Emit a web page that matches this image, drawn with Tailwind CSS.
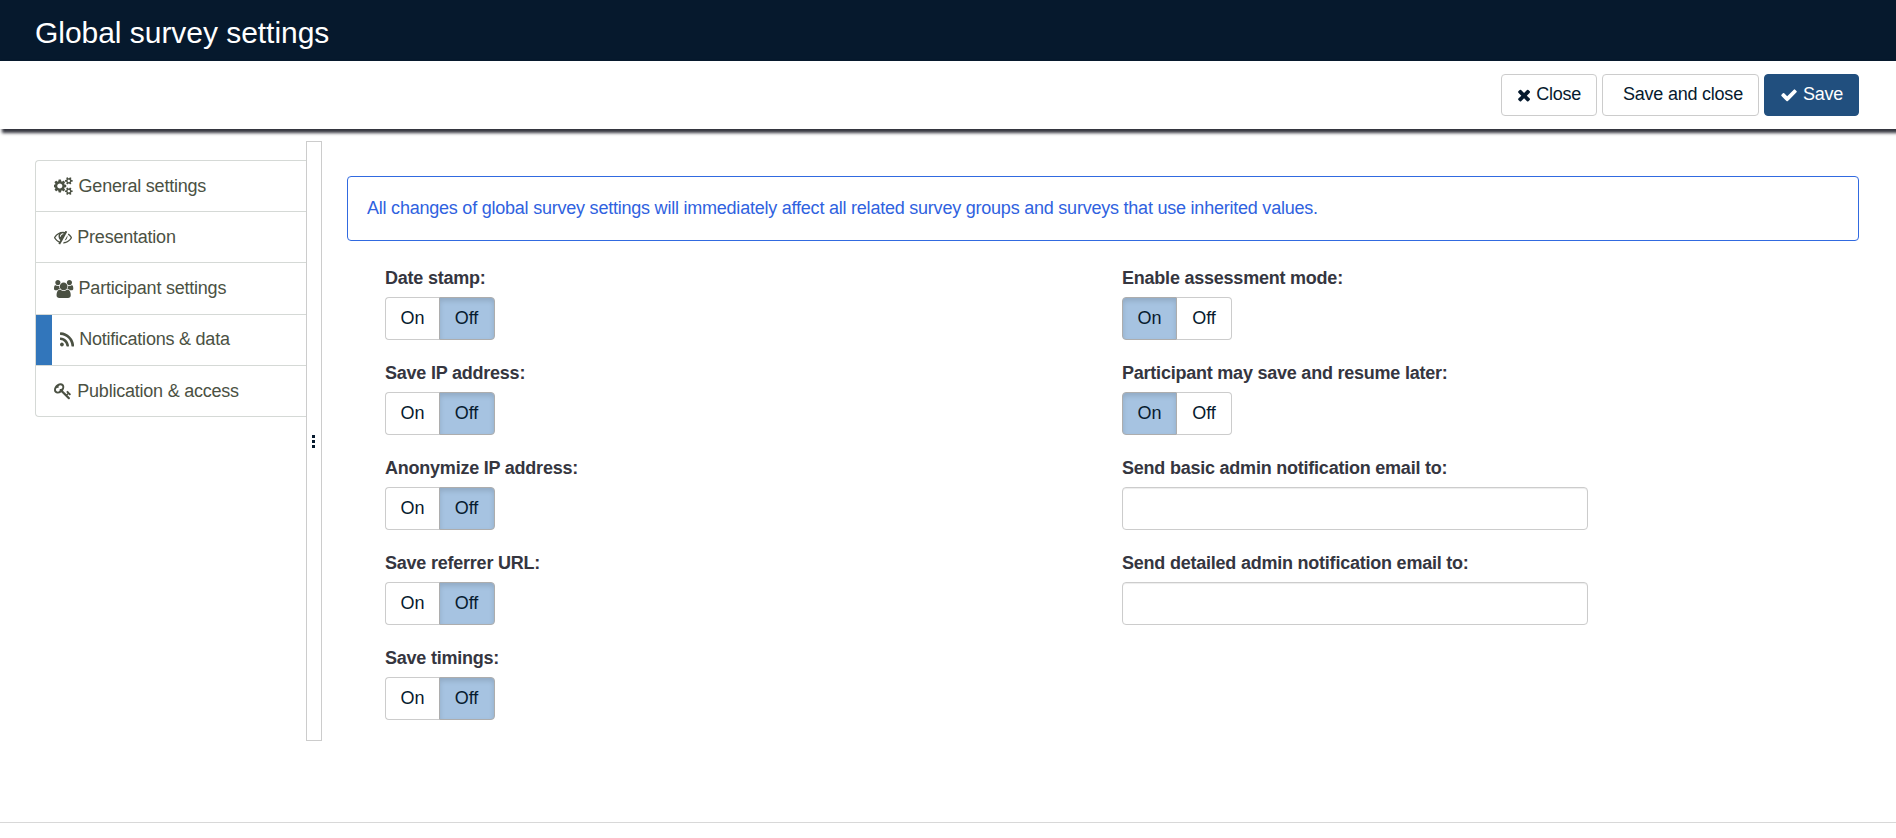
<!DOCTYPE html>
<html lang="en">
<head>
<meta charset="utf-8">
<title>Global survey settings</title>
<script src="https://cdn.jsdelivr.net/npm/@tailwindcss/browser@4"></script>
</head>
<body class="flex h-[838px] flex-col overflow-hidden bg-white font-['Liberation_Sans',Arial,sans-serif] text-[18px] leading-[25.7px] tracking-[-0.225px] text-[#061a2e]">
  <header class="flex h-[61px] shrink-0 items-start bg-[#06192d] px-[35px] pt-4">
    <h1 class="text-[30px] leading-[33px] tracking-[-0.04px] text-white">Global survey settings</h1>
  </header>

  <div class="flex h-[68px] shrink-0 justify-end gap-[5px] bg-white pt-[13px] pr-[37px] shadow-[3px_3px_3px_1px_#35363f]">
    <button class="flex h-[42px] w-24 items-center gap-[5px] rounded border border-[#ccc] pl-[15px]">
      <svg class="h-[18px] w-[14.14px] shrink-0 fill-current" viewBox="192 0 1408 1792"><path d="M1490 1322q0 40-28 68l-136 136q-28 28-68 28t-68-28l-294-294-294 294q-28 28-68 28t-68-28l-136-136q-28-28-28-68t28-68l294-294-294-294q-28-28-28-68t28-68l136-136q28-28 68-28t68 28l294 294 294-294q28-28 68-28t68 28l136 136q28 28 28 68t-28 68l-294 294 294 294q28 28 28 68z"/></svg>
      <span>Close</span>
    </button>
    <button class="flex h-[42px] w-[157px] items-center rounded border border-[#ccc] pl-5"><span class="whitespace-nowrap">Save and close</span></button>
    <button class="flex h-[42px] w-[95px] items-center gap-[5px] rounded border border-[#214f7e] bg-[#214f7e] pl-[15px] text-white">
      <svg class="h-[18px] w-[18px] shrink-0 fill-current" viewBox="0 0 1792 1792"><path d="M1671 566q0 40-28 68l-724 724-136 136q-28 28-68 28t-68-28l-136-136-362-362q-28-28-28-68t28-68l136-136q28-28 68-28t68 28l294 295 656-657q28-28 68-28t68 28l136 136q28 28 28 68z"/></svg>
      <span>Save</span>
    </button>
  </div>

  <main class="flex h-[694px] shrink-0 border-b border-[#d8d8d8] pr-[37px] pl-[35px]">
    <nav class="mt-[31px] flex h-[257px] w-[271px] flex-col divide-y divide-[#d5d9d6] rounded-l border-y border-l border-[#d5d9d6] text-[#4b5143]">
      <a class="flex flex-1 items-center gap-[5px] pl-[18.3px]">
        <svg class="h-[18px] w-[19.3px] fill-current" viewBox="0 0 1920 1792"><path d="M832 896q0-106-75-181t-181-75-181 75-75 181 75 181 181 75 181-75 75-181zm768 512q0-52-38-90t-90-38-90 38-38 90q0 53 37.5 90.5t90.5 37.5 90.5-37.5 37.5-90.5zm0-1024q0-52-38-90t-90-38-90 38-38 90q0 53 37.5 90.5t90.5 37.5 90.5-37.5 37.5-90.5zm-384 421v185q0 10-7 19.5t-16 10.5l-155 24q-11 35-32 76 34 48 90 115 7 11 7 20 0 12-7 19-23 30-82.5 89.5t-78.5 59.5q-11 0-21-7l-115-90q-37 19-77 31-11 108-23 155-7 24-30 24h-186q-11 0-20-7.5t-10-17.5l-23-153q-34-10-75-31l-118 89q-7 7-20 7-11 0-21-8-144-133-144-160 0-9 7-19 10-14 41-53t47-61q-23-44-35-82l-152-24q-10-1-17-9.5t-7-19.5v-185q0-10 7-19.5t16-10.5l155-24q11-35 32-76-34-48-90-115-7-11-7-20 0-12 7-20 22-30 82-89t79-59q11 0 21 7l115 90q34-18 77-32 11-108 23-154 7-24 30-24h186q11 0 20 7.5t10 17.5l23 153q34 10 75 31l118-89q8-7 20-7 11 0 21 8 144 133 144 160 0 8-7 19-12 16-42 54t-45 60q23 48 34 82l152 23q10 2 17 10.5t7 19.5zm640 533v140q0 16-149 31-12 27-30 52 51 113 51 138 0 4-4 7-122 71-124 71-8 0-46-47t-52-68q-20 2-30 2t-30-2q-14 21-52 68t-46 47q-2 0-124-71-4-3-4-7 0-25 51-138-18-25-30-52-149-15-149-31v-140q0-16 149-31 13-29 30-52-51-113-51-138 0-4 4-7 4-2 35-20t59-34 30-16q8 0 46 46.5t52 67.5q20-2 30-2t30 2q51-71 92-112l6-2q4 0 124 70 4 3 4 7 0 25-51 138 17 23 30 52 149 15 149 31zm0-1024v140q0 16-149 31-12 27-30 52 51 113 51 138 0 4-4 7-122 71-124 71-8 0-46-47t-52-68q-20 2-30 2t-30-2q-14 21-52 68t-46 47q-2 0-124-71-4-3-4-7 0-25 51-138-18-25-30-52-149-15-149-31v-140q0-16 149-31 13-29 30-52-51-113-51-138 0-4 4-7 4-2 35-20t59-34 30-16q8 0 46 46.5t52 67.5q20-2 30-2t30 2q51-71 92-112l6-2q4 0 124 70 4 3 4 7 0 25-51 138 17 23 30 52 149 15 149 31z"/></svg>
        <span class="pt-px">General settings</span>
      </a>
      <a class="flex flex-1 items-center gap-[5px] pl-[18.3px]">
        <svg class="h-[18px] w-[18px] fill-current" viewBox="0 0 1792 1792"><path d="M555 1335l78-141q-87-63-136-159t-49-203q0-121 61-225-229 117-381 353 167 258 427 375zm389-759q0-20-14-34t-34-14q-125 0-214.5 89.5t-89.5 214.5q0 20 14 34t34 14 34-14 14-34q0-86 61-147t147-61q20 0 34-14t14-34zm363-191q0 7-1 9-105 188-315 566t-316 567l-49 89q-10 16-28 16-12 0-134-70-16-10-16-28 0-12 44-87-143-65-263.5-173t-208.5-245q-20-31-20-69t20-69q153-235 380-371t496-136q89 0 180 17l54-97q10-16 28-16 5 0 18 6t31 15.5 33 18.5 31.5 18.5 19.5 11.5q16 10 16 27zm37 447q0 139-79 253.5t-209 164.5l280-502q8 45 8 84zm448 128q0 35-20 69-39 64-109 145-150 172-347.5 267t-419.5 95l74-132q212-18 392.5-137t301.5-307q-115-179-282-294l63-112q95 64 182.5 153t144.5 184q20 34 20 69z"/></svg>
        <span class="pt-px">Presentation</span>
      </a>
      <a class="flex flex-1 items-center gap-[5px] pl-[18.3px]">
        <svg class="h-[18px] w-[19.3px] fill-current" viewBox="0 0 1920 1792"><path d="M593 896q-162 5-265 128h-134q-82 0-138-40.5t-56-118.5q0-353 124-353 6 0 43.5 21t97.5 42.5 119 21.5q67 0 133-23-5 37-5 66 0 139 81 256zm1071 637q0 120-73 189.5t-194 69.5h-874q-121 0-194-69.5t-73-189.5q0-53 3.5-103.5t14-109 26.5-108.5 43-97.5 62-81 85.5-53.5 111.5-20q10 0 43 21.5t73 48 107 48 135 21.5 135-21.5 107-48 73-48 43-21.5q61 0 111.5 20t85.5 53.5 62 81 43 97.5 26.5 108.5 14 109 3.5 103.5zm-1024-1277q0 106-75 181t-181 75-181-75-75-181 75-181 181-75 181 75 75 181zm704 384q0 159-112.5 271.5t-271.5 112.5-271.5-112.5-112.5-271.5 112.5-271.5 271.5-112.5 271.5 112.5 112.5 271.5zm576 225q0 78-56 118.5t-138 40.5h-134q-103-123-265-128 81-117 81-256 0-29-5-66 66 23 133 23 59 0 119-21.5t97.5-42.5 43.5-21q124 0 124 353zm-128-609q0 106-75 181t-181 75-181-75-75-181 75-181 181-75 181 75 75 181z"/></svg>
        <span class="pt-px">Participant settings</span>
      </a>
      <a class="flex flex-1 items-center gap-[5px]">
        <i class="mr-[3px] w-4 self-stretch bg-[#3276bb]"></i>
        <svg class="h-[18px] w-[14.14px] fill-current" viewBox="192 0 1408 1792"><path d="M576 1344q0 80-56 136t-136 56-136-56-56-136 56-136 136-56 136 56 56 136zm512 123q2 28-17 48-18 21-47 21h-135q-25 0-43-16.5t-20-41.5q-22-229-184.5-391.5t-391.5-184.5q-25-2-41.5-20t-16.5-43v-135q0-29 21-47 17-17 43-17h5q160 13 306 80.5t259 181.5q114 113 181.5 259t80.5 306zm512 2q2 27-18 47-18 20-46 20h-143q-26 0-44.5-17.5t-19.5-42.5q-12-215-101-408.5t-231.5-336-336-231.5-408.5-102q-25-1-42.5-19.5t-17.5-43.5v-143q0-28 20-46 18-18 44-18h3q262 13 501.5 120t425.5 294q187 186 294 425.5t120 501.5z"/></svg>
        <span>Notifications &amp; data</span>
      </a>
      <a class="flex flex-1 items-center gap-[5px] pl-[18.3px]">
        <svg class="h-[18px] w-[18px] fill-current" viewBox="0 0 1792 1792"><path d="M832 512q0-80-56-136t-136-56-136 56-56 136q0 42 19 83-41-19-83-19-80 0-136 56t-56 136 56 136 136 56 136-56 56-136q0-42-19-83 41 19 83 19 80 0 136-56t56-136zm851 704q0 17-49 66t-66 49q-9 0-28.5-16t-36.5-33-38.5-40-24.5-26l-96 96 220 220q28 28 28 68 0 42-39 81t-81 39q-40 0-68-28l-671-671q-176 131-365 131-163 0-265.5-102.5t-102.5-265.5q0-160 95-313t248-248 313-95q163 0 265.5 102.5t102.5 265.5q0 189-131 365l355 355 96-96q-3-3-26-24.5t-40-38.5-33-36.5-16-28.5q0-17 49-66t66-49q13 0 23 10 6 6 46 44.5t82 79.5 86.5 86 73 78 28.5 41z"/></svg>
        <span class="pt-px">Publication &amp; access</span>
      </a>
    </nav>

    <div class="mt-3 flex h-[600px] w-4 flex-col items-center justify-center gap-0.5 border border-[#ccc] pr-px">
      <i class="h-[3px] w-[3px] bg-[#061a2e]"></i>
      <i class="h-[3px] w-[3px] bg-[#061a2e]"></i>
      <i class="h-[3px] w-[3px] bg-[#061a2e]"></i>
    </div>

    <section class="ml-[25px] flex-1 pt-[47px]">
      <div class="flex h-[65px] items-center rounded border border-[#316ae0] pl-[19px] text-[#2f62e0]">All changes of global survey settings will immediately affect all related survey groups and surveys that use inherited values.</div>
      <div class="mt-[25px] flex pl-[38px]">
        <div class="flex w-[737px] flex-col gap-[21px]">
          <div>
            <div class="mb-[5px] h-[26px] font-bold text-[#35363f]">Date stamp:</div>
            <div class="flex h-[43px] w-[110px] tracking-normal">
              <button class="w-[54px] rounded-l border border-r-0 border-[#ccc] pt-px">On</button>
              <button class="w-14 rounded-r border border-[#adadad] bg-[#a6c3e1] pt-px pr-px shadow-[inset_0_3px_5px_rgba(0,0,0,0.125)]">Off</button>
            </div>
          </div>
          <div>
            <div class="mb-[5px] h-[26px] font-bold text-[#35363f]">Save IP address:</div>
            <div class="flex h-[43px] w-[110px] tracking-normal">
              <button class="w-[54px] rounded-l border border-r-0 border-[#ccc] pt-px">On</button>
              <button class="w-14 rounded-r border border-[#adadad] bg-[#a6c3e1] pt-px pr-px shadow-[inset_0_3px_5px_rgba(0,0,0,0.125)]">Off</button>
            </div>
          </div>
          <div>
            <div class="mb-[5px] h-[26px] font-bold text-[#35363f]">Anonymize IP address:</div>
            <div class="flex h-[43px] w-[110px] tracking-normal">
              <button class="w-[54px] rounded-l border border-r-0 border-[#ccc] pt-px">On</button>
              <button class="w-14 rounded-r border border-[#adadad] bg-[#a6c3e1] pt-px pr-px shadow-[inset_0_3px_5px_rgba(0,0,0,0.125)]">Off</button>
            </div>
          </div>
          <div>
            <div class="mb-[5px] h-[26px] font-bold text-[#35363f]">Save referrer URL:</div>
            <div class="flex h-[43px] w-[110px] tracking-normal">
              <button class="w-[54px] rounded-l border border-r-0 border-[#ccc] pt-px">On</button>
              <button class="w-14 rounded-r border border-[#adadad] bg-[#a6c3e1] pt-px pr-px shadow-[inset_0_3px_5px_rgba(0,0,0,0.125)]">Off</button>
            </div>
          </div>
          <div>
            <div class="mb-[5px] h-[26px] font-bold text-[#35363f]">Save timings:</div>
            <div class="flex h-[43px] w-[110px] tracking-normal">
              <button class="w-[54px] rounded-l border border-r-0 border-[#ccc] pt-px">On</button>
              <button class="w-14 rounded-r border border-[#adadad] bg-[#a6c3e1] pt-px pr-px shadow-[inset_0_3px_5px_rgba(0,0,0,0.125)]">Off</button>
            </div>
          </div>
        </div>
        <div class="flex w-[466px] flex-col gap-[21px]">
          <div>
            <div class="mb-[5px] h-[26px] font-bold text-[#35363f]">Enable assessment mode:</div>
            <div class="flex h-[43px] w-[110px] tracking-normal">
              <button class="w-[55px] rounded-l border border-[#adadad] bg-[#a6c3e1] pt-px shadow-[inset_0_3px_5px_rgba(0,0,0,0.125)]">On</button>
              <button class="w-[55px] rounded-r border border-l-0 border-[#ccc] pt-px">Off</button>
            </div>
          </div>
          <div>
            <div class="mb-[5px] h-[26px] font-bold text-[#35363f]">Participant may save and resume later:</div>
            <div class="flex h-[43px] w-[110px] tracking-normal">
              <button class="w-[55px] rounded-l border border-[#adadad] bg-[#a6c3e1] pt-px shadow-[inset_0_3px_5px_rgba(0,0,0,0.125)]">On</button>
              <button class="w-[55px] rounded-r border border-l-0 border-[#ccc] pt-px">Off</button>
            </div>
          </div>
          <div>
            <div class="mb-[5px] h-[26px] font-bold text-[#35363f]">Send basic admin notification email to:</div>
            <input type="text" class="block h-[43px] w-full rounded border border-[#ccc] shadow-[inset_0_1px_1px_rgba(0,0,0,0.075)]">
          </div>
          <div>
            <div class="mb-[5px] h-[26px] font-bold text-[#35363f]">Send detailed admin notification email to:</div>
            <input type="text" class="block h-[43px] w-full rounded border border-[#ccc] shadow-[inset_0_1px_1px_rgba(0,0,0,0.075)]">
          </div>
        </div>
      </div>
    </section>
  </main>
</body>
</html>
